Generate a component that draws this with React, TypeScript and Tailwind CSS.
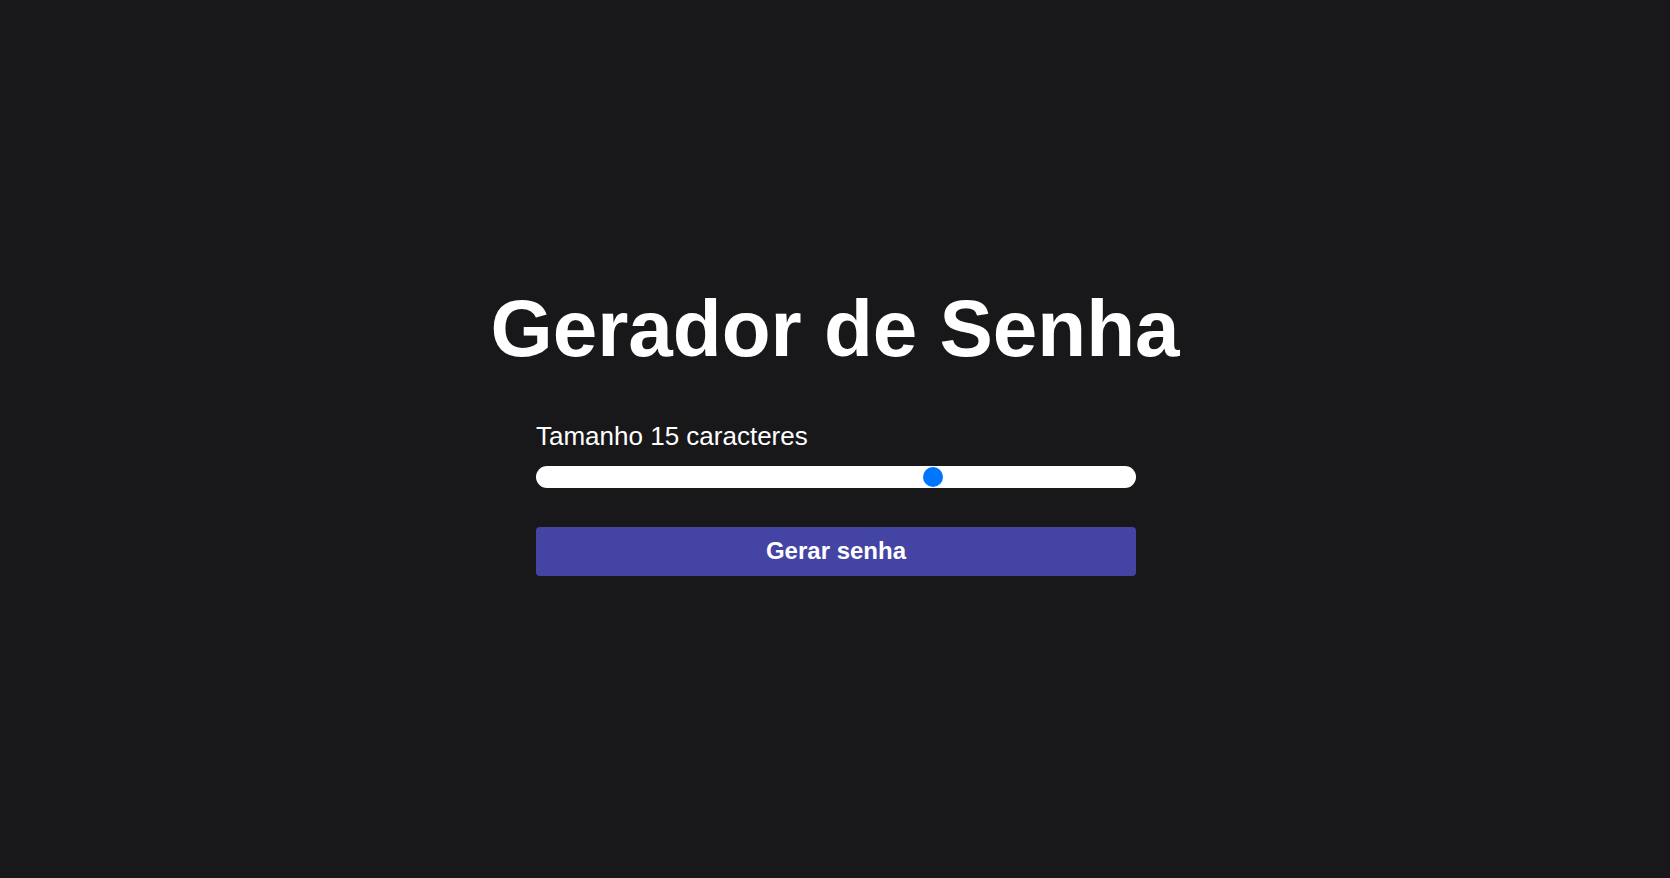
import { useState } from "react";

const App = () => {
  const [size, setSize] = useState(15);

  return (
    <div className="min-h-screen bg-[#18181b] flex flex-col items-center justify-center pb-[20px] font-['Liberation_Sans',Arial,sans-serif] text-white">
      <h1 className="text-[80px] font-bold leading-[92px] mb-[46px]">Gerador de Senha</h1>

      <div className="w-[600px] flex flex-col translate-x-[1px]">
        <span className="text-[26px] leading-[30px]">Tamanho {size} caracteres</span>

        <input
          type="range"
          min={5}
          max={20}
          value={size}
          onChange={(e) => setSize(Number(e.target.value))}
          className="mt-[15px] w-full h-[22px] appearance-none bg-white rounded-[11px] outline-none cursor-pointer [&::-webkit-slider-thumb]:appearance-none [&::-webkit-slider-thumb]:w-5 [&::-webkit-slider-thumb]:h-5 [&::-webkit-slider-thumb]:rounded-full [&::-webkit-slider-thumb]:bg-[#0075ff]"
        />

        <button className="mt-[39px] h-[49px] w-full rounded-[4px] bg-[#4444a4] text-white text-[24px] font-bold">
          Gerar senha
        </button>
      </div>
    </div>
  );
};

export default App;
